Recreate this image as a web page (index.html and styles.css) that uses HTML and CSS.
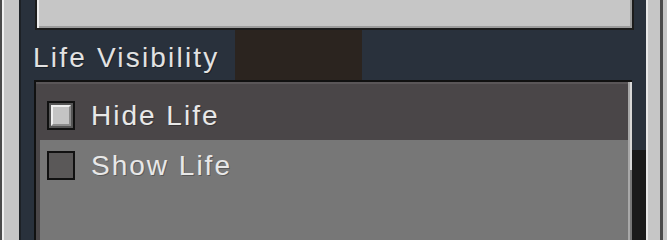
FILE: index.html
```html
<!DOCTYPE html>
<html>
<head>
<meta charset="utf-8">
<link rel="stylesheet" href="styles.css">
</head>
<body>
<div class="frame-left"></div>
<div class="main">
  <div class="top-panel"></div>
  <div class="header">
    <div class="label">Life Visibility</div>
    <div class="shade"></div>
  </div>
  <div class="list-row">
    <div class="list">
      <div class="rows">
        <div class="row row-active">
          <div class="check checked"><div class="check-inner"></div></div>
          <span class="row-text">Hide Life</span>
        </div>
        <div class="row row-plain">
          <div class="check"></div>
          <span class="row-text">Show Life</span>
        </div>
      </div>
      <div class="scrollbar"></div>
    </div>
    <div class="gutter"></div>
  </div>
</div>
<div class="frame-right"></div>
</body>
</html>
```
FILE: styles.css
```css
html, body {
  margin: 0;
  padding: 0;
  height: 100%;
}
html {
  background: #777777;
}
body {
  width: 667px;
  min-height: 217px;
  overflow: hidden;
  display: flex;
  background: #29313c;
  font-family: "Liberation Sans", Arial, sans-serif;
}
.frame-left {
  width: 21px;
  flex: none;
  background: linear-gradient(to right, #4a4a4a 0 2px, #f0f0f0 2px 4px, #c6c6c6 4px 19px, #1d2126 19px 21px);
}
.frame-right {
  width: 21px;
  flex: none;
  background: linear-gradient(to right, #e8e8e8 0 2px, #c6c6c6 2px 14px, #4a4a4a 14px 17px, #c6c6c6 17px 21px);
}
.main {
  flex: 1;
  display: flex;
  flex-direction: column;
  background: #29313c;
}
.top-panel {
  height: 28px;
  margin: 0 12px 0 14px;
  background: #c6c6c6;
  border: 2px solid #1c1c1c;
  border-top: none;
  box-shadow: inset 2px 0 0 #ececec, inset -2px 0 0 #9c9c9c, inset 0 -2px 0 #9c9c9c;
}
.header {
  height: 50px;
  display: grid;
  grid-template-columns: 214px 127px 1fr;
}
.label {
  padding: 14px 0 0 12px;
  font-size: 28px;
  line-height: 28px;
  letter-spacing: 2.2px;
  color: #e2e2e2;
  text-shadow: 1px 1px 0 rgba(0, 0, 0, 0.35);
  white-space: nowrap;
}
.shade {
  background: #2b241f;
}
.list-row {
  flex: 1;
  display: flex;
  padding-left: 13px;
}
.list {
  flex: 1;
  display: flex;
  background: #4a4648;
  border-top: 2px solid #111;
  border-left: 2px solid #111;
}
.rows {
  flex: 1;
  display: flex;
  flex-direction: column;
  padding-top: 2px;
  box-shadow: inset 0 2px 0 #5a5658;
}
.row {
  display: flex;
  gap: 16px;
  margin-left: 4px;
  padding-left: 7px;
}
.row-active {
  height: 56px;
  align-items: flex-start;
  padding-top: 17px;
  box-sizing: border-box;
}
.row-plain {
  flex: 1;
  align-items: flex-start;
  padding-top: 11px;
  background: #777777;
}
.check {
  width: 24px;
  height: 25px;
  flex: none;
  border: 2px solid #111;
  background: #5a5858;
}
.check.checked {
  background: #555;
  padding: 2px;
  width: 20px;
  height: 21px;
}
.check-inner {
  height: 100%;
  box-sizing: border-box;
  background: #c4c4c4;
  border-top: 2px solid #efefef;
  border-left: 2px solid #efefef;
  border-right: 2px solid #8c8c8c;
  border-bottom: 2px solid #8c8c8c;
}
.row-text {
  font-size: 28px;
  line-height: 28px;
  letter-spacing: 2px;
  color: #e8e8e8;
  text-shadow: 1px 1px 0 rgba(0, 0, 0, 0.25);
  white-space: nowrap;
  margin-top: 1px;
}
.scrollbar {
  width: 4px;
  flex: none;
  background: linear-gradient(to bottom, #d8d8d8 0 88px, #777777 88px);
  box-shadow: inset 2px 0 0 #a8a8a8;
}
.gutter {
  width: 14px;
  flex: none;
  background: linear-gradient(to bottom, #29313c 0 70px, #1b1b1b 70px);
}
```
